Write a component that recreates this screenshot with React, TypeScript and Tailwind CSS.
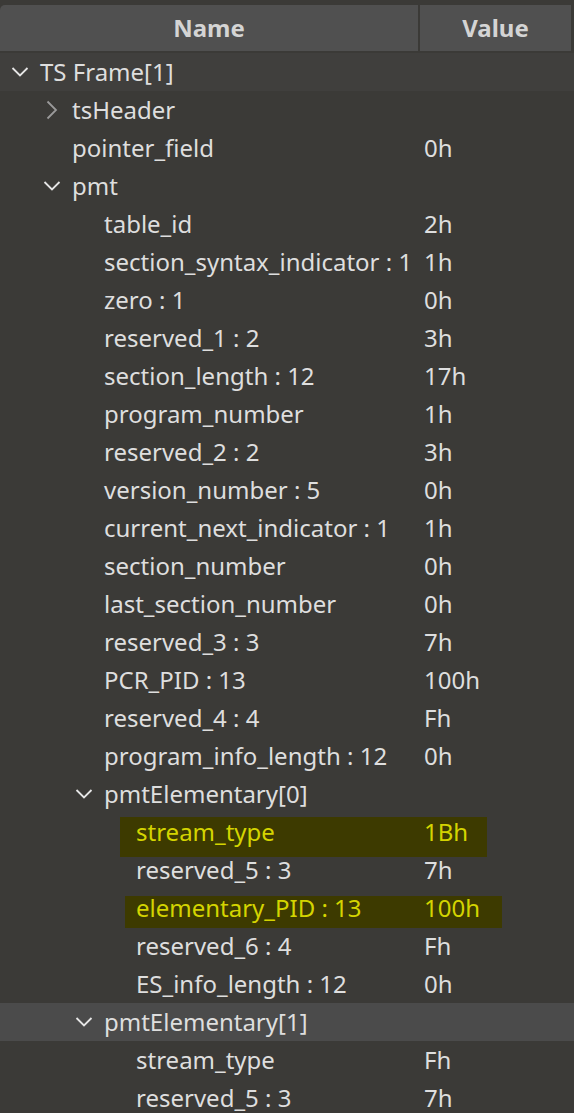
import React from 'react'

type Row = {
  name: string
  value?: string
  level: number
  toggle?: 'open' | 'closed'
  hl?: 'a' | 'b'
  selected?: boolean
  frame?: boolean
}

const rows: Row[] = [
  { name: 'TS Frame[1]', level: 0, toggle: 'open', frame: true },
  { name: 'tsHeader', level: 1, toggle: 'closed' },
  { name: 'pointer_field', value: '0h', level: 1 },
  { name: 'pmt', level: 1, toggle: 'open' },
  { name: 'table_id', value: '2h', level: 2 },
  { name: 'section_syntax_indicator : 1', value: '1h', level: 2 },
  { name: 'zero : 1', value: '0h', level: 2 },
  { name: 'reserved_1 : 2', value: '3h', level: 2 },
  { name: 'section_length : 12', value: '17h', level: 2 },
  { name: 'program_number', value: '1h', level: 2 },
  { name: 'reserved_2 : 2', value: '3h', level: 2 },
  { name: 'version_number : 5', value: '0h', level: 2 },
  { name: 'current_next_indicator : 1', value: '1h', level: 2 },
  { name: 'section_number', value: '0h', level: 2 },
  { name: 'last_section_number', value: '0h', level: 2 },
  { name: 'reserved_3 : 3', value: '7h', level: 2 },
  { name: 'PCR_PID : 13', value: '100h', level: 2 },
  { name: 'reserved_4 : 4', value: 'Fh', level: 2 },
  { name: 'program_info_length : 12', value: '0h', level: 2 },
  { name: 'pmtElementary[0]', level: 2, toggle: 'open' },
  { name: 'stream_type', value: '1Bh', level: 3, hl: 'a' },
  { name: 'reserved_5 : 3', value: '7h', level: 3 },
  { name: 'elementary_PID : 13', value: '100h', level: 3, hl: 'b' },
  { name: 'reserved_6 : 4', value: 'Fh', level: 3 },
  { name: 'ES_info_length : 12', value: '0h', level: 3 },
  { name: 'pmtElementary[1]', level: 2, toggle: 'open', selected: true },
  { name: 'stream_type', value: 'Fh', level: 3 },
  { name: 'reserved_5 : 3', value: '7h', level: 3 },
]

const pad = ['pl-0', 'pl-[32px]', 'pl-[64px]', 'pl-[96px]']

function Chevron({ open }: { open: boolean }) {
  if (open) {
    return (
      <svg width="18" height="12" viewBox="0 0 18 12" className="text-[#e6e6e6]">
        <polyline points="1.5,2 9,9.5 16.5,2" fill="none" stroke="currentColor" strokeWidth="1.8" />
      </svg>
    )
  }
  return (
    <svg width="12" height="20" viewBox="0 0 12 20" className="text-[#9a9a9a]">
      <polyline points="1.5,1.5 10,10 1.5,18.5" fill="none" stroke="currentColor" strokeWidth="1.8" />
    </svg>
  )
}

function TreeRow({ row }: { row: Row }) {
  const yellow = !!row.hl
  return (
    <div
      className={`relative flex h-[38px] items-center ${
        row.selected ? 'bg-[#4b4b4b]' : row.frame ? 'bg-[#403f3d]' : ''
      }`}
    >
      {row.hl === 'a' && (
        <div className="absolute left-[120px] top-[4px] h-[40px] w-[367px] bg-[#3d3a00]" />
      )}
      {row.hl === 'b' && (
        <div className="absolute left-[125px] top-[7px] h-[32px] w-[377px] bg-[#3d3a00]" />
      )}
      <div className={`relative flex w-[420px] items-center ${pad[row.level]}`}>
        <div className="flex w-[40px] shrink-0 items-center justify-center">
          {row.toggle && <Chevron open={row.toggle === 'open'} />}
        </div>
        <span className={`whitespace-nowrap ${yellow ? 'text-[#d4d400]' : 'text-[#dedede]'}`}>
          {row.name}
        </span>
      </div>
      <span className={`relative pl-[4px] ${yellow ? 'text-[#d4d400]' : 'text-[#dedede]'}`}>
        {row.value}
      </span>
    </div>
  )
}

export default function App() {
  return (
    <div
      className="h-[1113px] w-[574px] overflow-hidden bg-[#3b3a37] text-[24px] leading-none"
      style={{ fontFamily: '"Segoe UI", "Noto Sans", "Open Sans", sans-serif' }}
    >
      <div className="pt-[5px]">
        <div className="flex h-[46px] items-stretch gap-[2px] pr-[3px]">
          <div className="flex w-[418px] items-center justify-center rounded-tl-[5px] bg-[#505050] font-bold text-[#d4d4d4]">
            Name
          </div>
          <div className="flex flex-1 items-center justify-center bg-[#505050] font-bold text-[#d4d4d4]">
            Value
          </div>
        </div>
        <div className="h-[2px]" />
        <div>
          {rows.map((r, i) => (
            <TreeRow key={i} row={r} />
          ))}
        </div>
      </div>
    </div>
  )
}
